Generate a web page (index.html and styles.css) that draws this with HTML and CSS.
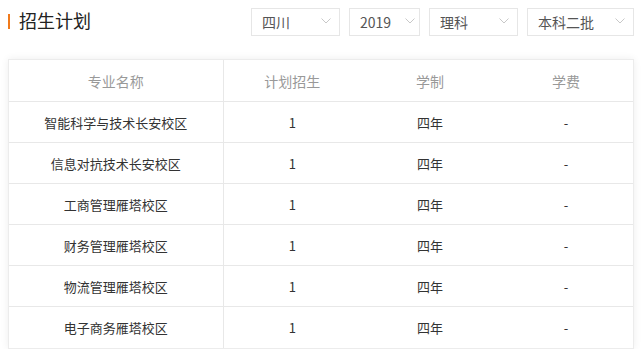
FILE: index.html
```html
<!DOCTYPE html>
<html lang="zh-CN">
<head>
<meta charset="utf-8">
<title>招生计划</title>
<link rel="stylesheet" href="styles.css">
</head>
<body>
<div class="page">
  <div class="topbar">
    <h2 class="title">招生计划</h2>
    <div class="filters">
      <div class="select w89"><span>四川</span><svg class="chev" width="10" height="6" viewBox="0 0 10 6"><polyline points="0.5,0.5 5,5 9.5,0.5" fill="none" stroke="#c8c8c8" stroke-width="1"/></svg></div>
      <div class="select w71"><span>2019</span><svg class="chev" width="10" height="6" viewBox="0 0 10 6"><polyline points="0.5,0.5 5,5 9.5,0.5" fill="none" stroke="#c8c8c8" stroke-width="1"/></svg></div>
      <div class="select w89"><span>理科</span><svg class="chev" width="10" height="6" viewBox="0 0 10 6"><polyline points="0.5,0.5 5,5 9.5,0.5" fill="none" stroke="#c8c8c8" stroke-width="1"/></svg></div>
      <div class="select w107"><span>本科二批</span><svg class="chev" width="10" height="6" viewBox="0 0 10 6"><polyline points="0.5,0.5 5,5 9.5,0.5" fill="none" stroke="#c8c8c8" stroke-width="1"/></svg></div>
    </div>
  </div>
  <div class="card">
    <table class="plan">
      <colgroup>
        <col class="c1"><col class="c2"><col class="c3"><col class="c4">
      </colgroup>
      <thead>
        <tr><th class="first">专业名称</th><th>计划招生</th><th>学制</th><th>学费</th></tr>
      </thead>
      <tbody>
        <tr><td class="first">智能科学与技术长安校区</td><td>1</td><td>四年</td><td>-</td></tr>
        <tr><td class="first">信息对抗技术长安校区</td><td>1</td><td>四年</td><td>-</td></tr>
        <tr><td class="first">工商管理雁塔校区</td><td>1</td><td>四年</td><td>-</td></tr>
        <tr><td class="first">财务管理雁塔校区</td><td>1</td><td>四年</td><td>-</td></tr>
        <tr><td class="first">物流管理雁塔校区</td><td>1</td><td>四年</td><td>-</td></tr>
        <tr><td class="first">电子商务雁塔校区</td><td>1</td><td>四年</td><td>-</td></tr>
      </tbody>
    </table>
  </div>
</div>
</body>
</html>
```
FILE: styles.css
```css
html, body {
  margin: 0;
  padding: 0;
  background: #fff;
}
body {
  font-family: "Noto Sans CJK SC", "Noto Sans", sans-serif;
  color: #333;
}
.page {
  padding: 8px 10px 0 8px;
}
.topbar {
  display: flex;
  justify-content: space-between;
  align-items: center;
  height: 28px;
}
.title {
  margin: -4px 0 0 0;
  font-size: 18px;
  font-weight: normal;
  color: #222;
  line-height: 24px;
  display: flex;
  align-items: center;
  gap: 9px;
}
.title::before {
  content: "";
  display: block;
  width: 2px;
  height: 15px;
  background: #f07a1c;
  margin-top: 2px;
}
.filters {
  display: flex;
  gap: 9px;
}
.select {
  box-sizing: border-box;
  height: 28px;
  border: 1px solid #e6e6e6;
  display: flex;
  align-items: center;
  justify-content: space-between;
  padding: 0 8px 0 10px;
  font-size: 14px;
  color: #555;
}
.select span {
  line-height: 26px;
}
.chev {
  display: block;
  margin-top: -2px;
}
.w89 { width: 89px; }
.w71 { width: 71px; padding-right: 4px; }
.w107 { width: 107px; }
.card {
  margin-top: 23px;
  border: 1px solid #ececec;
  box-shadow: 0 0 8px rgba(0, 0, 0, 0.07);
  background: #fff;
}
.plan {
  width: 100%;
  border-collapse: collapse;
  table-layout: fixed;
}
.c1 { width: 214px; }
.c2 { width: 138px; }
.c3 { width: 138px; }
.plan th {
  height: 41px;
  font-weight: normal;
  font-size: 14px;
  color: #999;
  border-bottom: 1px solid #e8e8e8;
  padding: 0;
  text-align: center;
}
.plan td {
  height: 40px;
  font-size: 13px;
  color: #333;
  border-bottom: 1px solid #e8e8e8;
  padding: 0;
  text-align: center;
}
.plan tbody tr:last-child td {
  border-bottom: none;
  height: 41px;
}
.plan .first {
  border-right: 1px solid #e8e8e8;
}
```
